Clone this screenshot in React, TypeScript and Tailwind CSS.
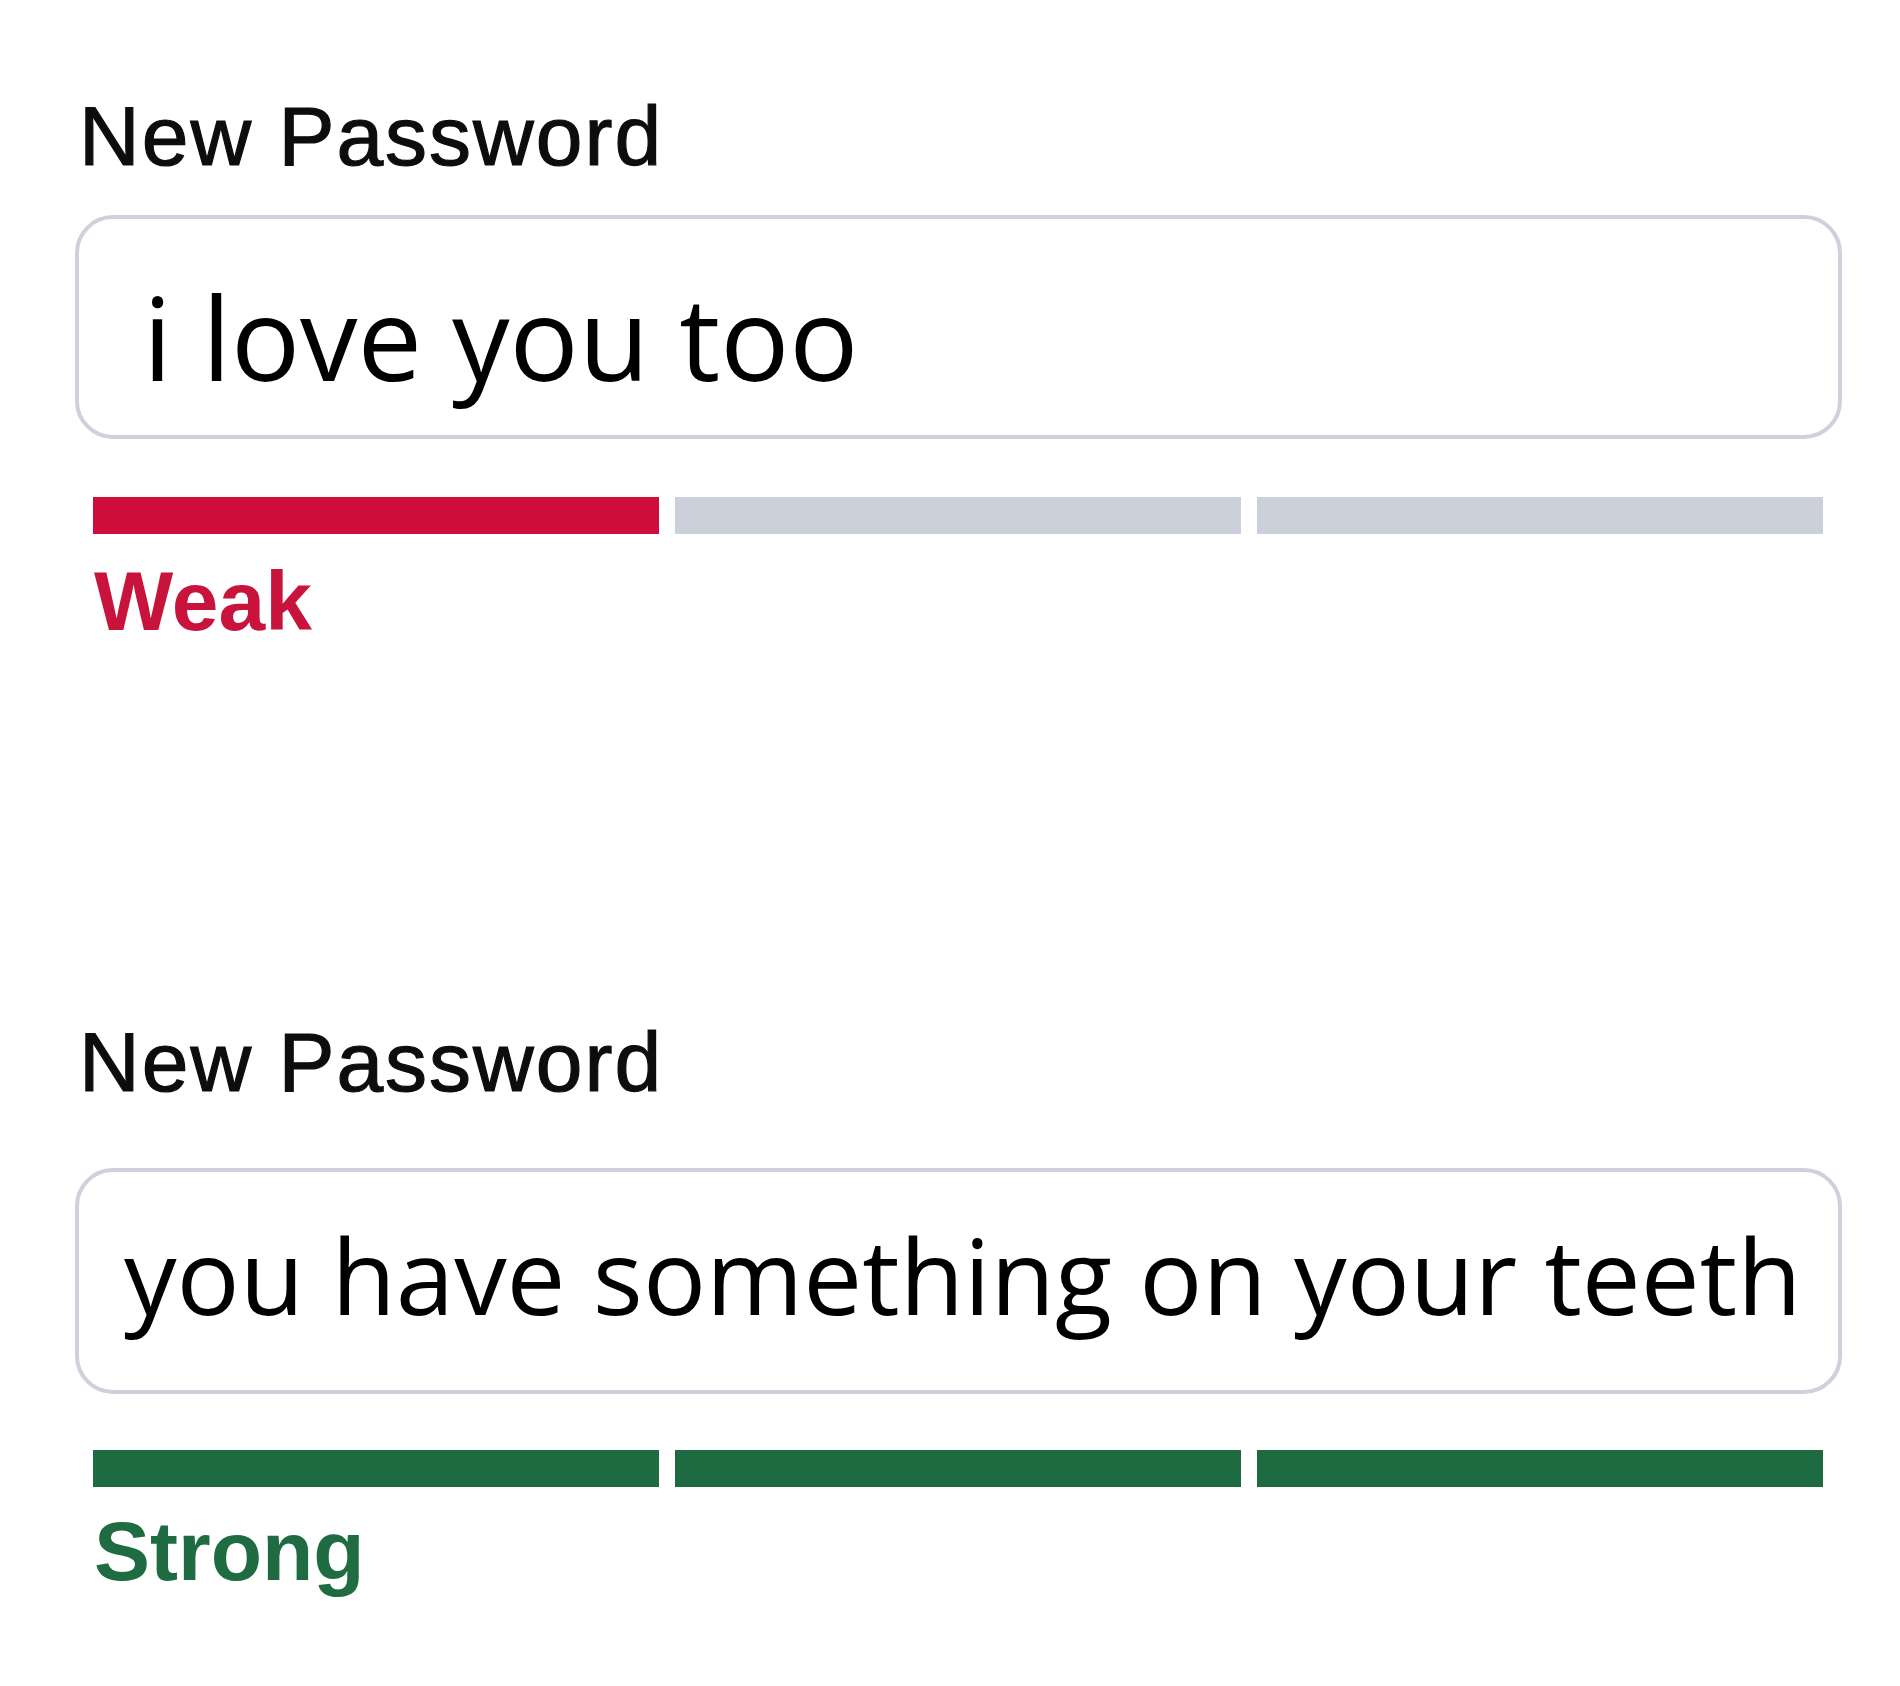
import React from "react";

type Level = "weak" | "strong";

function Meter({ level }: { level: Level }) {
  const filled = level === "weak" ? 1 : 3;
  const on = level === "weak" ? "bg-[#cf0d3b]" : "bg-[#1e6b41]";
  return (
    <div className="flex w-[1730px] gap-[16px] ml-[18px]">
      {[0, 1, 2].map((i) => (
        <div key={i} className={`h-[37px] flex-1 ${i < filled ? on : "bg-[#cbd0da]"}`} />
      ))}
    </div>
  );
}

function Field({
  value,
  level,
  fontClass,
  inputClass,
  labelMt,
  inputMt,
  barMt,
  statusMt,
}: {
  value: string;
  level: Level;
  fontClass: string;
  inputClass: string;
  labelMt: string;
  inputMt: string;
  barMt: string;
  statusMt: string;
}) {
  return (
    <section className="flex flex-col">
      <label
        className={`${labelMt} ml-[4px] text-[84px] leading-none tracking-[2px] text-[#0d0d0d] [-webkit-text-stroke:1.2px_#0d0d0d] font-['Liberation_Sans',Arial,sans-serif]`}
      >
        New Password
      </label>
      <div
        className={`${inputMt} ${inputClass} w-[1767px] rounded-[38px] border-[4px] border-[#cfd0dc] bg-white`}
      >
        <span className={`${fontClass} block text-black font-['Open_Sans',sans-serif] whitespace-nowrap`}>
          {value}
        </span>
      </div>
      <div className={barMt}>
        <Meter level={level} />
      </div>
      <div
        className={`${statusMt} ml-[19px] text-[84px] leading-none font-bold font-['Liberation_Sans',Arial,sans-serif] ${
          level === "weak" ? "text-[#c8143c]" : "text-[#1f6c42]"
        }`}
      >
        {level === "weak" ? "Weak" : "Strong"}
      </div>
    </section>
  );
}

export default function App() {
  return (
    <div className="min-h-[1686px] w-[1900px] bg-white pl-[75px]">
      <Field
        value="i love you too"
        level="weak"
        fontClass="text-[115px] leading-[1.362]"
        inputClass="h-[224px] pt-[40px] pl-[64px]"
        labelMt="mt-[94px]"
        inputMt="mt-[37px]"
        barMt="mt-[58px]"
        statusMt="mt-[25px]"
      />
      <Field
        value="you have something on your teeth"
        level="strong"
        fontClass="text-[105px] leading-[1.362]"
        inputClass="h-[226px] pt-[31px] pl-[45px]"
        labelMt="mt-[377px]"
        inputMt="mt-[64px]"
        barMt="mt-[56px]"
        statusMt="mt-[22px]"
      />
    </div>
  );
}
